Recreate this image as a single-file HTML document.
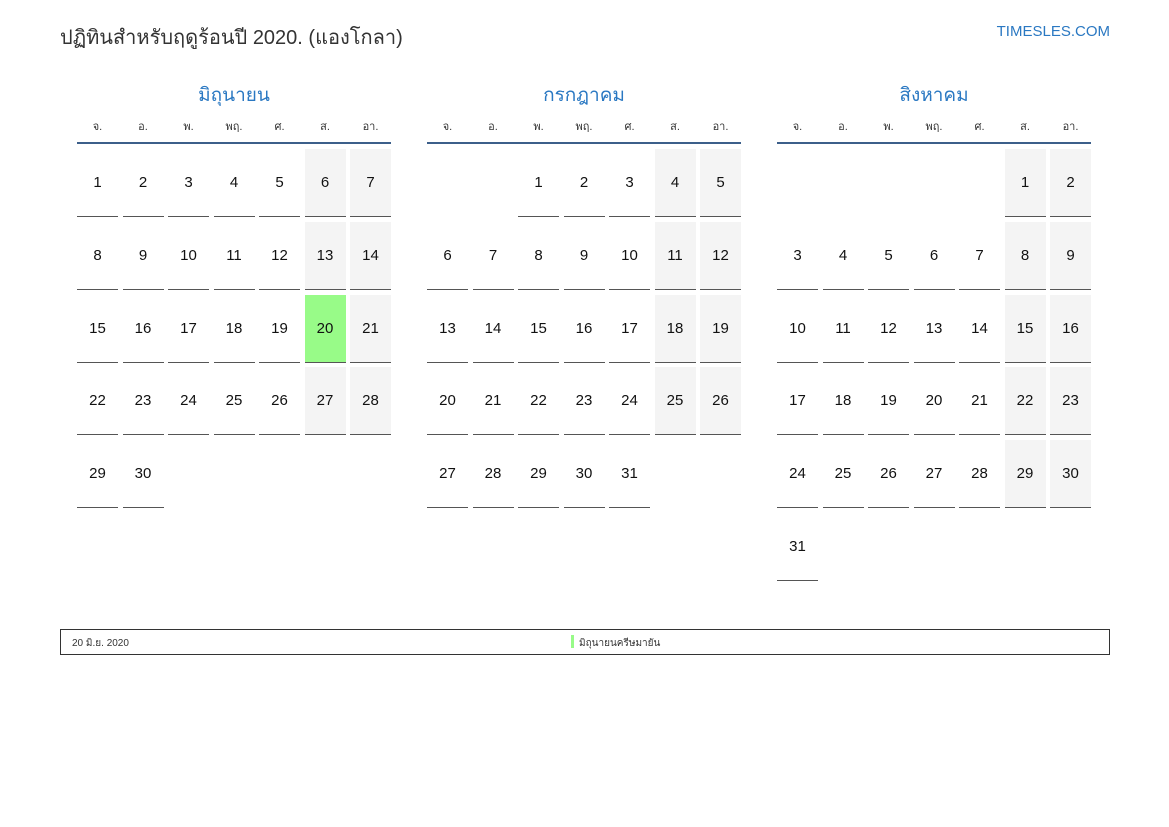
<!DOCTYPE html>
<html><head><meta charset="utf-8"><style>
*{margin:0;padding:0;box-sizing:border-box}
body{width:1169px;height:827px;background:#fff;font-family:"Liberation Sans","DejaVu Sans",sans-serif;position:relative;overflow:hidden}
.title{position:absolute;left:60px;top:21px;font-size:20px;color:#333}
.site{position:absolute;right:59px;top:23px;font-size:15px;color:#2a78c2}
.m{position:absolute;top:83px;width:314px}
.mt{text-align:center;color:#2a78c2;font-size:19px;height:30px;line-height:26px}
.dn{display:grid;grid-template-columns:repeat(7,41px);column-gap:4.5px;font-size:11px;color:#333;text-align:center;height:31px;line-height:29px;border-bottom:2px solid #3c5f8a}
.g{display:grid;grid-template-columns:repeat(7,41px);column-gap:4.5px;grid-auto-rows:68px;row-gap:4.8px;margin-top:5px}
.g div{border-bottom:1px solid #555;font-size:15px;color:#111;text-align:center;line-height:68px}
.g .w{background:#f4f4f4}
.g .h{background:#98fb88}
.g .e{border:none}
.foot{position:absolute;left:60px;top:629px;width:1050px;height:26px;border:1px solid #333;font-size:10px;color:#333}
.foot span{position:absolute;top:6px}
</style></head><body>
<div class="title">ปฏิทินสำหรับฤดูร้อนปี 2020. (แองโกลา)</div>
<div class="site">TIMESLES.COM</div>

<div class="m" style="left:77px">
<div class="mt">มิถุนายน</div>
<div class="dn"><span>จ.</span><span>อ.</span><span>พ.</span><span>พฤ.</span><span>ศ.</span><span>ส.</span><span>อา.</span></div>
<div class="g">
<div>1</div><div>2</div><div>3</div><div>4</div><div>5</div><div class="w">6</div><div class="w">7</div>
<div>8</div><div>9</div><div>10</div><div>11</div><div>12</div><div class="w">13</div><div class="w">14</div>
<div>15</div><div>16</div><div>17</div><div>18</div><div>19</div><div class="h">20</div><div class="w">21</div>
<div>22</div><div>23</div><div>24</div><div>25</div><div>26</div><div class="w">27</div><div class="w">28</div>
<div>29</div><div>30</div>
</div></div>

<div class="m" style="left:427px">
<div class="mt">กรกฎาคม</div>
<div class="dn"><span>จ.</span><span>อ.</span><span>พ.</span><span>พฤ.</span><span>ศ.</span><span>ส.</span><span>อา.</span></div>
<div class="g">
<div class="e"></div><div class="e"></div><div>1</div><div>2</div><div>3</div><div class="w">4</div><div class="w">5</div>
<div>6</div><div>7</div><div>8</div><div>9</div><div>10</div><div class="w">11</div><div class="w">12</div>
<div>13</div><div>14</div><div>15</div><div>16</div><div>17</div><div class="w">18</div><div class="w">19</div>
<div>20</div><div>21</div><div>22</div><div>23</div><div>24</div><div class="w">25</div><div class="w">26</div>
<div>27</div><div>28</div><div>29</div><div>30</div><div>31</div>
</div></div>

<div class="m" style="left:777px">
<div class="mt">สิงหาคม</div>
<div class="dn"><span>จ.</span><span>อ.</span><span>พ.</span><span>พฤ.</span><span>ศ.</span><span>ส.</span><span>อา.</span></div>
<div class="g">
<div class="e"></div><div class="e"></div><div class="e"></div><div class="e"></div><div class="e"></div><div class="w">1</div><div class="w">2</div>
<div>3</div><div>4</div><div>5</div><div>6</div><div>7</div><div class="w">8</div><div class="w">9</div>
<div>10</div><div>11</div><div>12</div><div>13</div><div>14</div><div class="w">15</div><div class="w">16</div>
<div>17</div><div>18</div><div>19</div><div>20</div><div>21</div><div class="w">22</div><div class="w">23</div>
<div>24</div><div>25</div><div>26</div><div>27</div><div>28</div><div class="w">29</div><div class="w">30</div>
<div>31</div>
</div></div>

<div class="foot">
<span style="left:11px">20 มิ.ย. 2020</span>
<span style="left:510px;top:5px;width:3px;height:13px;background:#98fb88"></span>
<span style="left:518px">มิถุนายนครีษมายัน</span>
</div>
</body></html>
